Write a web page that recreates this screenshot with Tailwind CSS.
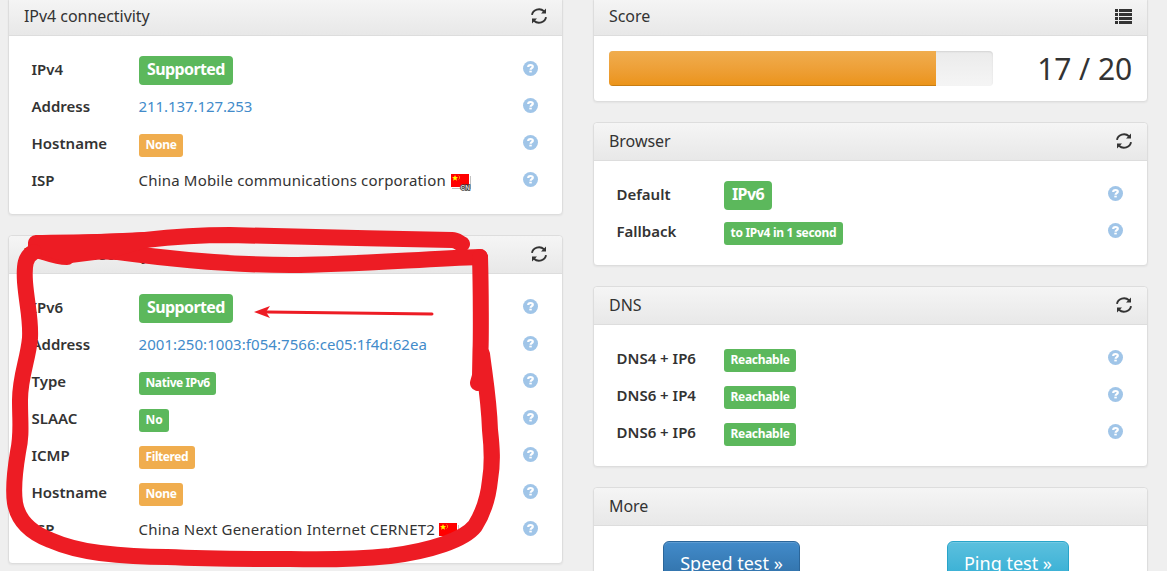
<!DOCTYPE html>
<html lang="en">
<head>
<meta charset="utf-8">
<title>IPv6 test</title>
<script src="https://cdn.jsdelivr.net/npm/@tailwindcss/browser@4"></script>
</head>
<body class="relative h-[571px] w-[1167px] overflow-hidden bg-[#efefef] font-['Noto_Sans',sans-serif] text-[15px] leading-[22px] text-[#333]">
<svg class="hidden">
  <symbol id="refresh" viewBox="0 0 18 18"><path d="M2 7.800A7 6.300 0 0 1 14 4.200M16 10.200A7 6.300 0 0 1 4 13.800" fill="none" stroke="#333" stroke-width="1.900"/><path d="M16 1.500v5h-5zM2 16.500v-5h5z" fill="#333"/></symbol>
  <symbol id="help" viewBox="0 0 15 15"><circle cx="7.5" cy="7.5" r="7.5" fill="#a0c5e8"/><path d="M5.200 5.900C5.200 4.400 6.100 4 7.500 4s2.300.6 2.300 1.700C9.800 7.200 7.600 7.100 7.600 8.800" fill="none" stroke="#fff" stroke-width="2.200"/><path d="M6.300 9.700h2.500v1.700h-2.500z" fill="#fff"/></symbol>
  <symbol id="flag" viewBox="0 0 20 17"><path d="M1 14h18V2h1v13H1z" fill="#999" opacity=".6"/><path d="M0 0h18v13H0z" fill="#f00"/><path d="M4 1l.9 2.100 2.200.1-1.700 1.400.6 2.200L4 5.600 2.100 6.800l.6-2.200L1 3.200l2.200-.1z" fill="#ff0"/><path d="M7.500 1.500l1 1v2l-1 1" fill="none" stroke="#fc0" stroke-width=".7"/><text x="9.500" y="15.500" font-size="6.500" font-weight="700" fill="#ddd" stroke="#333" stroke-width="1.500" paint-order="stroke" font-family="Liberation Sans">CN</text></symbol>
</svg>
<main class="-mt-[3px] flex gap-[30px] pl-2">
  <div class="flex w-[555px] flex-col gap-5">
    <section class="rounded border border-[#ddd] bg-white shadow-[0_1px_2px_rgba(0,0,0,0.05)]">
      <header class="flex h-[38px] items-center justify-between rounded-t border-b border-[#ddd] bg-linear-to-b from-[#f5f5f5] to-[#e8e8e8] pr-[14px] pb-[2px] pl-[15px]"><h3 class="text-base tracking-[-0.05px]">IPv4 connectivity</h3><svg class="size-[18px]"><use href="#refresh"/></svg></header>
      <div class="p-[15px]">
        <div class="flex h-[37px] items-center px-[7px]"><b class="mb-[2px] w-[108px] pl-[0.5px] font-semibold">IPv4</b><span class="mt-[2px] flex h-[29px] items-center rounded bg-[#5cb85c] px-2 pb-[3px] text-base font-bold tracking-[-0.6px] text-white">Supported</span><svg class="mr-[2px] mb-[3px] ml-auto size-[15px]"><use href="#help"/></svg></div>
        <div class="flex h-[37px] items-center px-[7px]"><b class="mb-[2px] w-[108px] pl-[0.5px] font-semibold">Address</b><span class="mb-[2px] -ml-[0.5px] tracking-[-0.08px] text-[#428bca]">211.137.127.253</span><svg class="mr-[2px] mb-[3px] ml-auto size-[15px]"><use href="#help"/></svg></div>
        <div class="flex h-[37px] items-center px-[7px]"><b class="mb-[2px] w-[108px] pl-[0.5px] font-semibold">Hostname</b><span class="mt-1 flex h-[23px] items-center rounded-[3px] bg-[#f0ad4e] px-[6.5px] pb-[2px] text-xs font-bold tracking-[-0.3px] text-white">None</span><svg class="mr-[2px] mb-[3px] ml-auto size-[15px]"><use href="#help"/></svg></div>
        <div class="flex h-[37px] items-center px-[7px]"><b class="mb-[2px] w-[108px] pl-[0.5px] font-semibold">ISP</b><span class="mb-[2px] -ml-[0.5px] tracking-[0.19px]">China Mobile communications corporation</span><svg class="mt-1 ml-[5px] h-[17px] w-5"><use href="#flag"/></svg><svg class="mr-[2px] mb-[3px] ml-auto size-[15px]"><use href="#help"/></svg></div>
      </div>
    </section>
    <section class="rounded border border-[#ddd] bg-white shadow-[0_1px_2px_rgba(0,0,0,0.05)]">
      <header class="flex h-[38px] items-center justify-between rounded-t border-b border-[#ddd] bg-linear-to-b from-[#f5f5f5] to-[#e8e8e8] pr-[14px] pb-[2px] pl-[15px]"><h3 class="text-base tracking-[-0.05px]">IPv6 connectivity</h3><svg class="size-[18px]"><use href="#refresh"/></svg></header>
      <div class="p-[15px]">
        <div class="flex h-[37px] items-center px-[7px]"><b class="mb-[2px] w-[108px] pl-[0.5px] font-semibold">IPv6</b><span class="mt-[2px] flex h-[29px] items-center rounded bg-[#5cb85c] px-2 pb-[3px] text-base font-bold tracking-[-0.6px] text-white">Supported</span><svg class="mr-[2px] mb-[3px] ml-auto size-[15px]"><use href="#help"/></svg></div>
        <div class="flex h-[37px] items-center px-[7px]"><b class="mb-[2px] w-[108px] pl-[0.5px] font-semibold">Address</b><span class="mb-[2px] -ml-[0.5px] tracking-[0.06px] text-[#428bca]">2001:250:1003:f054:7566:ce05:1f4d:62ea</span><svg class="mr-[2px] mb-[3px] ml-auto size-[15px]"><use href="#help"/></svg></div>
        <div class="flex h-[37px] items-center px-[7px]"><b class="mb-[2px] w-[108px] pl-[0.5px] font-semibold">Type</b><span class="mt-1 flex h-[23px] items-center rounded-[3px] bg-[#5cb85c] px-[6.5px] pb-[2px] text-xs font-bold tracking-[-0.4px] text-white">Native IPv6</span><svg class="mr-[2px] mb-[3px] ml-auto size-[15px]"><use href="#help"/></svg></div>
        <div class="flex h-[37px] items-center px-[7px]"><b class="mb-[2px] w-[108px] pl-[0.5px] font-semibold">SLAAC</b><span class="mt-1 flex h-[23px] items-center rounded-[3px] bg-[#5cb85c] px-[6.5px] pb-[2px] text-xs font-bold tracking-[-0.1px] text-white">No</span><svg class="mr-[2px] mb-[3px] ml-auto size-[15px]"><use href="#help"/></svg></div>
        <div class="flex h-[37px] items-center px-[7px]"><b class="mb-[2px] w-[108px] pl-[0.5px] font-semibold">ICMP</b><span class="mt-1 flex h-[23px] items-center rounded-[3px] bg-[#f0ad4e] px-[6.5px] pb-[2px] text-xs font-bold tracking-[-0.4px] text-white">Filtered</span><svg class="mr-[2px] mb-[3px] ml-auto size-[15px]"><use href="#help"/></svg></div>
        <div class="flex h-[37px] items-center px-[7px]"><b class="mb-[2px] w-[108px] pl-[0.5px] font-semibold">Hostname</b><span class="mt-1 flex h-[23px] items-center rounded-[3px] bg-[#f0ad4e] px-[6.5px] pb-[2px] text-xs font-bold tracking-[-0.3px] text-white">None</span><svg class="mr-[2px] mb-[3px] ml-auto size-[15px]"><use href="#help"/></svg></div>
        <div class="flex h-[37px] items-center px-[7px]"><b class="mb-[2px] w-[108px] pl-[0.5px] font-semibold">ISP</b><span class="mb-[2px] -ml-[0.5px] tracking-[0.19px]">China Next Generation Internet CERNET2</span><svg class="mt-1 ml-1 h-[17px] w-5"><use href="#flag"/></svg><svg class="mr-[2px] mb-[3px] ml-auto size-[15px]"><use href="#help"/></svg></div>
      </div>
    </section>
  </div>
  <div class="flex w-[555px] flex-col gap-5">
    <section class="rounded border border-[#ddd] bg-white shadow-[0_1px_2px_rgba(0,0,0,0.05)]">
      <header class="flex h-[38px] items-center justify-between rounded-t border-b border-[#ddd] bg-linear-to-b from-[#f5f5f5] to-[#e8e8e8] pr-[15px] pb-[2px] pl-[15px]"><h3 class="text-base tracking-[-0.05px]">Score</h3><svg class="mt-px h-[15px] w-[17px]" viewBox="0 0 17 15"><path d="M0 0h3v3H0zM4 0h13v3H4zM0 4h3v3H0zM4 4h13v3H4zM0 8h3v3H0zM4 8h13v3H4zM0 12h3v3H0zM4 12h13v3H4z" fill="#333"/></svg></header>
      <div class="flex items-center justify-between p-[15px]">
        <div class="h-[35px] w-[384px] overflow-hidden rounded bg-linear-to-b from-[#ebebeb] to-[#f5f5f5] shadow-[inset_0_1px_2px_rgba(0,0,0,0.1)]"><div class="h-full w-[327px] bg-linear-to-b from-[#f0ad4e] to-[#eb9316] shadow-[inset_0_-1px_0_rgba(0,0,0,0.15)]"></div></div>
        <span class="text-[30px] leading-[35px] tracking-[-0.1px]">17 / 20</span>
      </div>
    </section>
    <section class="rounded border border-[#ddd] bg-white shadow-[0_1px_2px_rgba(0,0,0,0.05)]">
      <header class="flex h-[38px] items-center justify-between rounded-t border-b border-[#ddd] bg-linear-to-b from-[#f5f5f5] to-[#e8e8e8] pr-[14px] pb-[2px] pl-[15px]"><h3 class="text-base tracking-[-0.05px]">Browser</h3><svg class="size-[18px]"><use href="#refresh"/></svg></header>
      <div class="p-[15px]">
        <div class="flex h-[37px] items-center px-[7px]"><b class="mb-[2px] w-[108px] pl-[0.5px] font-semibold">Default</b><span class="mt-[2px] flex h-[29px] items-center rounded bg-[#5cb85c] px-2 pb-[3px] text-base font-bold tracking-[-0.6px] text-white">IPv6</span><svg class="mr-[2px] mb-[3px] ml-auto size-[15px]"><use href="#help"/></svg></div>
        <div class="flex h-[37px] items-center px-[7px]"><b class="mb-[2px] w-[108px] pl-[0.5px] font-semibold">Fallback</b><span class="mt-1 flex h-[23px] items-center rounded-[3px] bg-[#5cb85c] px-[6.5px] pb-[2px] text-xs font-bold tracking-[-0.3px] text-white">to IPv4 in 1 second</span><svg class="mr-[2px] mb-[3px] ml-auto size-[15px]"><use href="#help"/></svg></div>
      </div>
    </section>
    <section class="rounded border border-[#ddd] bg-white shadow-[0_1px_2px_rgba(0,0,0,0.05)]">
      <header class="flex h-[38px] items-center justify-between rounded-t border-b border-[#ddd] bg-linear-to-b from-[#f5f5f5] to-[#e8e8e8] pr-[14px] pb-[2px] pl-[15px]"><h3 class="text-base tracking-[-0.05px]">DNS</h3><svg class="size-[18px]"><use href="#refresh"/></svg></header>
      <div class="p-[15px]">
        <div class="flex h-[37px] items-center px-[7px]"><b class="mb-[2px] w-[108px] pl-[0.5px] font-semibold">DNS4 + IP6</b><span class="mt-1 flex h-[23px] items-center rounded-[3px] bg-[#5cb85c] px-[6.5px] pb-[2px] text-xs font-bold tracking-[-0.3px] text-white">Reachable</span><svg class="mr-[2px] mb-[3px] ml-auto size-[15px]"><use href="#help"/></svg></div>
        <div class="flex h-[37px] items-center px-[7px]"><b class="mb-[2px] w-[108px] pl-[0.5px] font-semibold">DNS6 + IP4</b><span class="mt-1 flex h-[23px] items-center rounded-[3px] bg-[#5cb85c] px-[6.5px] pb-[2px] text-xs font-bold tracking-[-0.3px] text-white">Reachable</span><svg class="mr-[2px] mb-[3px] ml-auto size-[15px]"><use href="#help"/></svg></div>
        <div class="flex h-[37px] items-center px-[7px]"><b class="mb-[2px] w-[108px] pl-[0.5px] font-semibold">DNS6 + IP6</b><span class="mt-1 flex h-[23px] items-center rounded-[3px] bg-[#5cb85c] px-[6.5px] pb-[2px] text-xs font-bold tracking-[-0.3px] text-white">Reachable</span><svg class="mr-[2px] mb-[3px] ml-auto size-[15px]"><use href="#help"/></svg></div>
      </div>
    </section>
    <section class="rounded border border-[#ddd] bg-white shadow-[0_1px_2px_rgba(0,0,0,0.05)]">
      <header class="flex h-[38px] items-center rounded-t border-b border-[#ddd] bg-linear-to-b from-[#f5f5f5] to-[#e8e8e8] pb-[2px] pl-[15px]"><h3 class="text-base tracking-[-0.05px]">More</h3></header>
      <div class="flex gap-[147px] py-[15px] pl-[69px] text-lg text-white [text-shadow:0_-1px_0_rgba(0,0,0,0.2)]">
        <button class="flex h-[46px] w-[137px] items-center justify-center rounded-md border border-[#2b669a] bg-linear-to-b from-[#428bca] to-[#2d6ca2] pb-[2px] shadow-[inset_0_1px_0_rgba(255,255,255,0.15)]">Speed test »</button>
        <button class="flex h-[46px] w-[122px] items-center justify-center rounded-md border border-[#28a4c9] bg-linear-to-b from-[#5bc0de] to-[#2aabd2] pb-[2px] shadow-[inset_0_1px_0_rgba(255,255,255,0.15)]">Ping test »</button>
      </div>
    </section>
  </div>
</main>
<svg class="absolute inset-0 h-[571px] w-[1167px]" viewBox="0 0 1167 571" fill="none" stroke="#ed1c24" stroke-width="16" stroke-linecap="round" stroke-linejoin="round">
  <path d="M36 243C70 242 115 243 145 240C180 236 205 235 230 235C280 236 380 239 452 240C457 240 459 243 462 244"/>
  <path d="M67 257C54 257 43 251 36 250M36 245C60 250 90 251 118 252C170 259 230 265 290 265C350 265 420 259 480 257"/>
  <path d="M36 245L145 240L110 250L70 255Z" fill="#ed1c24"/>
  <path d="M480 257C481 290 481 340 480.500 350L480 376L478 383"/>
  <path d="M34 252C25 256 24 266 25 282C27 306 31 318 30 338C28 360 20 376 20 400C20 424 22 434 18 452C15 470 13 490 15 503C18 520 29 532 50 540C66 547 84 551 100 553C125 556 145 557 167 557C210 559 250 559 290 559C330 560 360 559 390 556C430 551 464 540 475 526C482 515 488 500 490 480C493 462 492 448 490 430C489 400 485 378 482 354"/>
  <path d="M432 314L267 312" stroke-width="3"/>
  <path d="M254 312L270 306L266 312L270 318Z" fill="#ed1c24" stroke="none"/>
</svg>
</body>
</html>
